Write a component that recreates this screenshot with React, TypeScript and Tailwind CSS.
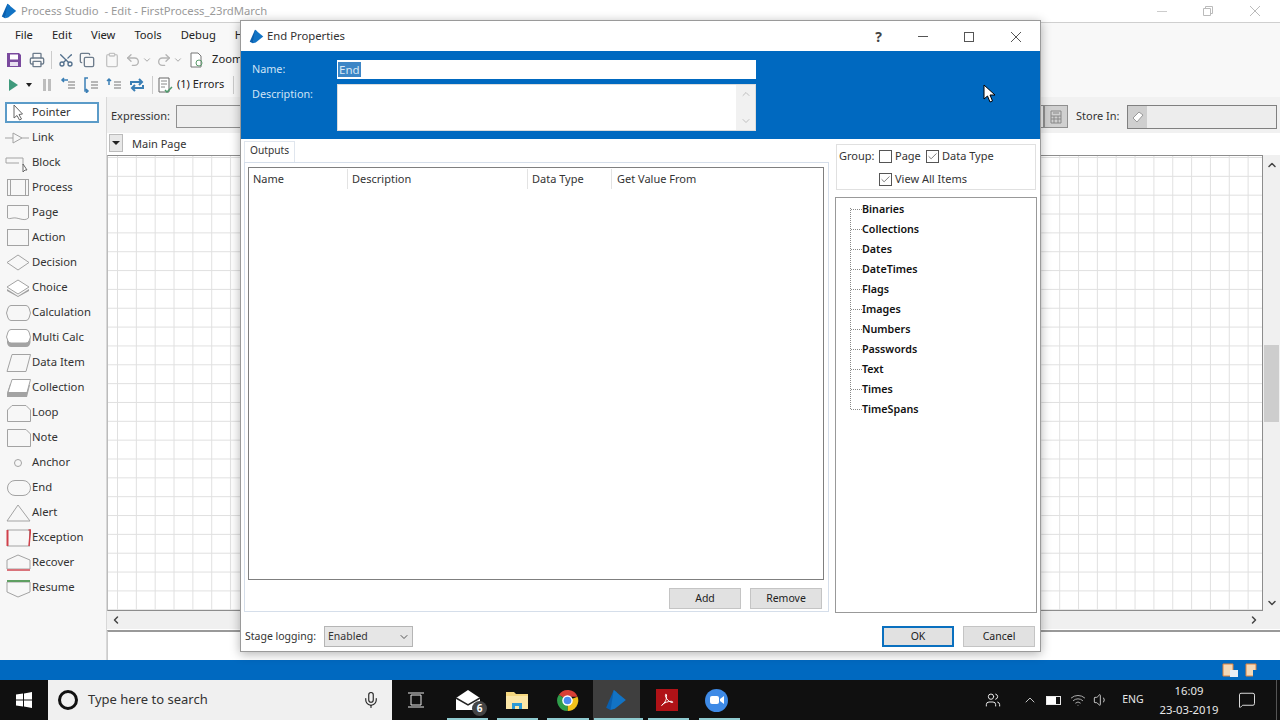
import { ReactNode } from 'react';
import { ChevronDown, ChevronUp, ChevronLeft, ChevronRight, Copy, Mic, Printer, Redo2, Scissors, Undo2, Clipboard, MessageSquare, Volume1, Wifi, Users, Check } from 'lucide-react';

const LOGO = (
  <>
    <path d="M1 17 L8 1 L11 3 L5 19 Z" fill="#0a5fae" />
    <path d="M8 1 L19 10 L9 18 L5 19 Z" fill="#1273c4" />
  </>
);

const G = { fill: 'none', stroke: '#a3a3a3', strokeWidth: 1 };

const TOOLS: { label: string; icon: ReactNode }[] = [
  { label: 'Pointer', icon: <path d="M11 3 V16 L14 13.5 L16.5 18 L18.5 17 L16 12.5 L19.5 12 Z" fill="#fff" stroke="#666" /> },
  { label: 'Link', icon: <><path d="M2 11 H10 M19 11 H26" {...G} /><path d="M10 6 L19 11 L10 16 Z" {...G} /></> },
  { label: 'Block', icon: <><path d="M3 6 H20 V13 M3 6 V11 H16" {...G} /><path d="M20 12 V20 L22 18 L24 18 Z" fill="#fff" stroke="#666" /></> },
  { label: 'Process', icon: <><rect x="4.5" y="2.5" width="21" height="16" {...G} /><path d="M7.5 2.5 V18.5 M22.5 2.5 V18.5" {...G} /></> },
  { label: 'Page', icon: <path d="M4.5 3.5 H25.5 V16 C21 20 15 15 10 16 C7 16.5 6 17 4.5 16 Z" {...G} /> },
  { label: 'Action', icon: <rect x="4.5" y="2.5" width="21" height="16" {...G} /> },
  { label: 'Decision', icon: <path d="M4 10.5 L15 3 L26 10.5 L15 18 Z" {...G} /> },
  { label: 'Choice', icon: <><path d="M4 12 V14 L15 20 L26 14 V12 L15 19 Z" fill="#a0a0a0" /><path d="M4 10 L15 3 L26 10 L15 17 Z" fill="#fff" stroke="#a3a3a3" /></> },
  { label: 'Calculation', icon: <path d="M8 3.5 H23 Q25 3.5 26 6 L27.5 11 L26 16 Q25 18.5 23 18.5 H8 Q6 18.5 5 16 L3.5 11 L5 6 Q6 3.5 8 3.5 Z" {...G} /> },
  { label: 'Multi Calc', icon: <><path d="M4 10 V16 Q5 20 8 20 H23 Q27 20 27.5 15 V10 Z" fill="#a3a3a3" /><path d="M8 2.5 H23 Q25 2.5 26 5 L27.5 10 L26 14 Q25 16 23 16 H8 Q6 16 5 14 L3.5 10 L5 5 Q6 2.5 8 2.5 Z" fill="#fff" stroke="#a3a3a3" /></> },
  { label: 'Data Item', icon: <path d="M9 2.5 H27.5 L23 19.5 H4 Z" {...G} /> },
  { label: 'Collection', icon: <><path d="M7 7 L4 16 V20 H24 L27 8 Z" fill="#a3a3a3" /><path d="M9 2.5 H27.5 L24 15.5 H5 Z" fill="#fff" stroke="#a3a3a3" /></> },
  { label: 'Loop', icon: <path d="M4.5 8 L9 3.5 H23 L27.5 8 V19.5 H4.5 Z" {...G} /> },
  { label: 'Note', icon: <path d="M4.5 2.5 H23 L27.5 7 V19.5 H4.5 Z" {...G} /> },
  { label: 'Anchor', icon: <circle cx="15" cy="11" r="3.5" {...G} /> },
  { label: 'End', icon: <rect x="4.5" y="3.5" width="23" height="15" rx="7.5" {...G} /> },
  { label: 'Alert', icon: <path d="M4 19 L15 3 L27 19 Z" {...G} /> },
  { label: 'Exception', icon: <><rect x="4.5" y="3" width="22" height="16" {...G} /><path d="M4.5 3 V19" stroke="#d0404a" strokeWidth="2" /><path d="M25.5 3 L27.5 3 L26 19" stroke="#d0404a" strokeWidth="1.5" fill="none" /></> },
  { label: 'Recover', icon: <><path d="M4 8 L15 3 L27 8 V17 H4 Z" {...G} /><path d="M4 18 H27" stroke="#d9737b" strokeWidth="2" /></> },
  { label: 'Resume', icon: <><path d="M4 5 V15 L15 20 L27 15 V5 Z" {...G} /><path d="M4 4 H27" stroke="#5f9f62" strokeWidth="2" /></> },
];

const TREE = ['Binaries', 'Collections', 'Dates', 'DateTimes', 'Flags', 'Images', 'Numbers', 'Passwords', 'Text', 'Times', 'TimeSpans'];

const FONT = 'font-["Noto_Sans","Open_Sans",sans-serif]';

function Box({ checked }: { checked?: boolean }) {
  return (
    <span className="flex h-[13px] w-[13px] shrink-0 items-center justify-center border border-[#555] bg-white">
      {checked && <Check className="h-[11px] w-[11px] text-[#444]" strokeWidth={1.5} />}
    </span>
  );
}

function DlgButton({ label, primary }: { label: string; primary?: boolean }) {
  return (
    <button className={`flex h-[21px] w-[72px] items-center justify-center bg-[#e1e1e1] text-[10.5px] text-[#222] ${primary ? 'border-2 border-[#0a70bf]' : 'border border-[#c4c4c4]'}`}>
      {label}
    </button>
  );
}

function ToolList() {
  return (
    <aside className="w-[107px] shrink-0 border-r border-[#d8d8d8] bg-[#f7f7f7] pt-[3px]">
      {TOOLS.map((t) => (
        <div key={t.label} className={`flex h-[25px] items-center text-[11.3px] text-[#333] ${t.label === 'Pointer' ? 'relative' : ''}`}>
          {t.label === 'Pointer' && <span className="absolute top-[2px] right-[7px] bottom-[2px] left-[5px] border-2 border-[#5b9bc8] bg-white" />}
          <svg viewBox="0 0 28 22" className="relative ml-[3px] h-[22px] w-[28px] shrink-0">{t.icon}</svg>
          <span className="relative ml-px">{t.label}</span>
        </div>
      ))}
    </aside>
  );
}

function Toolbars() {
  return (
    <>
      <div className="flex h-[24px] items-center bg-[#f8f8f8] pt-px text-[11.2px] text-[#222]">
        <span className="ml-[15px]">File</span>
        <span className="ml-[19px]">Edit</span>
        <span className="ml-[19px]">View</span>
        <span className="ml-[19px]">Tools</span>
        <span className="ml-[19px]">Debug</span>
        <span className="ml-[19px]">Help</span>
      </div>
      <div className="flex h-[25px] items-center bg-[#f8f8f8] text-[11.2px] text-[#222]">
        <svg viewBox="0 0 16 16" className="ml-[6px] h-4 w-4"><path d="M1 1 H13 L15 3 V15 H1 Z" fill="#7a4a9e" /><rect x="4" y="2.5" width="8" height="5" fill="#fff" /><rect x="4" y="10" width="8" height="4" fill="#e8e0f0" /></svg>
        <Printer className="ml-[7px] h-4 w-4 text-[#6d7c8c]" />
        <span className="ml-[6px] h-[18px] w-px bg-[#ccc]" />
        <Scissors className="ml-[6px] h-4 w-4 -rotate-90 text-[#53708d]" />
        <Copy className="ml-[5px] h-4 w-4 text-[#6d7c8c]" />
        <Clipboard className="ml-[9px] h-4 w-4 text-[#c4c4c4]" />
        <Undo2 className="ml-[5px] h-4 w-4 text-[#b4b4b4]" />
        <ChevronDown className="ml-px h-2.5 w-2.5 text-[#999]" />
        <Redo2 className="ml-[4px] h-4 w-4 text-[#b4b4b4]" />
        <ChevronDown className="ml-px h-2.5 w-2.5 text-[#999]" />
        <svg viewBox="0 0 16 16" className="ml-[5px] h-4 w-4"><path d="M3 1 H10 L13 4 V15 H3 Z" fill="#fff" stroke="#777" /><circle cx="11" cy="11" r="3" fill="none" stroke="#5a9a6a" /></svg>
        <span className="ml-[8px]">Zoom</span>
      </div>
      <div className="flex h-[25px] items-center bg-[#f8f8f8] text-[11px] text-[#222]">
        <svg viewBox="0 0 10 12" className="ml-[8px] h-3 w-[10px]"><path d="M1 0 L10 6 L1 12 Z" fill="#3f9a7c" /></svg>
        <svg viewBox="0 0 6 4" className="ml-[8px] h-1 w-1.5"><path d="M0 0 H6 L3 4 Z" fill="#222" /></svg>
        <svg viewBox="0 0 10 12" className="ml-[10px] h-3 w-[10px]"><path d="M1 0 H4 V12 H1 Z M6 0 H9 V12 H6 Z" fill="#bdbdbd" /></svg>
        {[0, 1, 2, 3].map((k) => (
          <svg key={k} viewBox="0 0 16 16" className={`h-4 w-4 ${k === 0 ? 'ml-[8px]' : 'ml-[7px]'}`}>
            {k === 3 ? (
              <path d="M2 8 V5 H13 M10 2 L13 5 L10 8 M14 8 V11 H3 M6 8 L3 11 L6 14" fill="none" stroke="#3b7fb5" strokeWidth="2" />
            ) : (
              <>
                <path d={k === 0 ? 'M8 3 H2 M4 1 L2 3 L4 5' : k === 1 ? 'M5 1 H2 V14 H5 M3 12 L5 14 L3 16' : 'M3 8 V2 M1 4 L3 2 L5 4'} fill="none" stroke="#3b7fb5" strokeWidth="1.5" />
                <path d="M8 5 H15 M8 8 H15 M8 11 H15" stroke="#777" />
              </>
            )}
          </svg>
        ))}
        <span className="ml-[7px] h-[18px] w-px bg-[#ccc]" />
        <svg viewBox="0 0 16 16" className="ml-[4px] h-4 w-4"><path d="M2 1 H12 V15 H2 Z" fill="#fff" stroke="#666" /><path d="M4 4 H10 M4 7 H10 M4 10 H8" stroke="#888" /><path d="M8 13 L10 15 L15 10" fill="none" stroke="#4c9a6a" strokeWidth="1.5" /></svg>
        <span className="ml-[4px]">(1) Errors</span>
        <span className="ml-[9px] h-[18px] w-px bg-[#ccc]" />
      </div>
    </>
  );
}

function Workspace() {
  return (
    <main className="flex min-w-0 flex-1 flex-col bg-white">
      <div className="flex h-[36px] shrink-0 items-center bg-[#f1f1f1] pt-[3px] text-[11px] text-[#333]">
        <span className="ml-[4px] w-[65px] whitespace-nowrap">Expression:</span>
        <span className="h-[23px] w-[868px] border border-[#909090] bg-[#efefef]" />
        <span className="flex h-[23px] w-[24px] items-center justify-center border border-[#909090] bg-[#d0d0d0]">
          <svg viewBox="0 0 12 14" className="h-[14px] w-3"><path d="M1 1 H11 V13 H1 Z M3 3 H9 M1 6 H11 M1 9 H11 M4 6 V13 M8 6 V13" fill="none" stroke="#888" /></svg>
        </span>
        <span className="ml-[8px] w-[51px] whitespace-nowrap">Store In:</span>
        <span className="flex h-[24px] w-[150px] border border-[#808080] bg-[#ededed]">
          <span className="flex w-[19px] items-center justify-center bg-[#cfcfcf]">
            <svg viewBox="0 0 12 12" className="h-3 w-3"><path d="M1 7 L7 1 L11 4 L5 11 Z" fill="#fff" stroke="#999" /></svg>
          </span>
        </span>
      </div>
      <div className="flex h-[22px] shrink-0 items-end">
        <span className="mb-[3px] ml-[2px] flex h-[18px] w-[14px] items-center justify-center border border-[#bbb] bg-[#e8e8e8]">
          <svg viewBox="0 0 8 4" className="h-1 w-2"><path d="M0 0 H8 L4 4 Z" fill="#222" /></svg>
        </span>
        <span className="ml-[9px] mb-[3px] text-[11px] text-[#333]">Main Page</span>
      </div>
      <div className="flex min-h-0 flex-1">
        <div className="flex-1 border-y border-r border-l border-[#8d8d8d] border-l-[#bbb] bg-[linear-gradient(to_right,#e0e0e0_1px,transparent_1px),linear-gradient(to_bottom,#e0e0e0_1px,transparent_1px)] bg-size-[18.85px_18.85px] bg-position-[9px_1px]" />
        <div className="flex w-[17px] shrink-0 flex-col items-center bg-[#f0f0f0] pt-[2px]">
          <ChevronUp className="mt-[2px] h-3 w-3 text-[#444]" strokeWidth={3} />
          <span className="mt-[174px] h-[77px] w-[15px] bg-[#cdcdcd]" />
          <ChevronDown className="mt-auto mb-[2px] h-3 w-3 text-[#444]" strokeWidth={3} />
        </div>
      </div>
      <div className="flex h-[18px] shrink-0 items-center justify-between bg-[#f0f0f0] pr-[20px] pl-[3px]">
        <ChevronLeft className="h-3 w-3 text-[#444]" strokeWidth={3} />
        <ChevronRight className="h-3 w-3 text-[#444]" strokeWidth={3} />
      </div>
      <div className="mt-px h-[30px] shrink-0 border-t-2 border-l border-t-[#999] border-l-[#ccc] bg-white" />
    </main>
  );
}

function Dialog() {
  return (
    <div className="absolute top-[20px] left-[240px] flex h-[632px] w-[801px] flex-col border border-[#9a9a9a] bg-white shadow-[0_2px_10px_rgba(0,0,0,0.3)]">
      <div className="flex h-[30px] shrink-0 items-center pt-px text-[11.3px] text-[#333]">
        <svg viewBox="0 0 20 20" className="ml-[8px] h-[15px] w-[15px]">{LOGO}</svg>
        <span className="ml-[3px]">End Properties</span>
        <span className="ml-auto text-sm font-bold text-[#444]">?</span>
        <span className="ml-[36px] h-px w-[10px] bg-[#555]" />
        <span className="ml-[36px] h-[10px] w-[10px] border border-[#555]" />
        <svg viewBox="0 0 12 12" className="mr-[18px] ml-[36px] h-3 w-3"><path d="M1 1 L11 11 M11 1 L1 11" stroke="#555" /></svg>
      </div>
      <div className="flex h-[88px] shrink-0 bg-[#0069c0] text-[10.8px] text-[#cfe3f5]">
        <div className="w-[96px] shrink-0 pt-[10px] pl-[11px]">
          <div className="h-[25px]">Name:</div>
          <div>Description:</div>
        </div>
        <div className="w-[419px] pt-[9px]">
          <div className="flex h-[19px] items-center bg-white pl-px">
            <span className="bg-[#3d86c6] px-px text-[11.5px] leading-[15px] text-[#d8e8f5]">End</span>
          </div>
          <div className="mt-[5px] flex h-[47px] border border-[#dcdcdc] bg-white">
            <div className="ml-auto flex w-[19px] flex-col items-center justify-between bg-[#f1f1f1] py-[3px]">
              <ChevronUp className="h-3 w-3 text-[#c0c0c0]" />
              <ChevronDown className="h-3 w-3 text-[#c0c0c0]" />
            </div>
          </div>
        </div>
      </div>
      <div className="flex h-[474px] shrink-0 text-[11px] text-[#333]">
        <div className="mt-[2px] ml-[3px] w-[585px] shrink-0">
          <div className="flex h-[21px] w-[51px] items-center justify-center border-x border-t border-[#e0e6ee] pb-[2px] text-[10.2px]">Outputs</div>
          <div className="h-[450px] border border-[#d5deea] pt-[4px] pl-[3px]">
            <div className="h-[413px] w-[576px] border border-[#7f7f7f] bg-white">
              <div className="flex h-[21px] items-center pt-px">
                <span className="flex h-full w-[99px] items-center border-r border-[#e3e3e3] pl-[4px]">Name</span>
                <span className="flex h-full w-[180px] items-center border-r border-[#e3e3e3] pl-[4px]">Description</span>
                <span className="flex h-full w-[84px] items-center border-r border-[#e3e3e3] pl-[4px]">Data Type</span>
                <span className="pl-[5px]">Get Value From</span>
              </div>
            </div>
            <div className="mt-[8px] flex justify-end gap-[9px] pr-[6px]">
              <DlgButton label="Add" />
              <DlgButton label="Remove" />
            </div>
          </div>
        </div>
        <div className="ml-[6px] w-[202px] shrink-0">
          <div className="mt-[5px] ml-px h-[46px] w-[200px] border border-[#e0e0e0] pt-[3px]">
            <div className="flex h-[17px] items-center">
              <span className="ml-[2px] w-[40px]">Group:</span>
              <Box />
              <span className="ml-[3px] w-[31px]">Page</span>
              <Box checked />
              <span className="ml-[3px]">Data Type</span>
            </div>
            <div className="mt-[8px] ml-[42px] flex h-[13px] items-center">
              <Box checked />
              <span className="ml-[3px]">View All Items</span>
            </div>
          </div>
          <div className="relative mt-[7px] h-[416px] border border-[#999] pt-px">
            <span className="absolute top-[10px] left-[14px] h-[201px] border-l border-dotted border-[#888]" />
            {TREE.map((name) => (
              <div key={name} className="flex h-[20px] items-center pl-[15px]">
                <span className="w-[11px] border-t border-dotted border-[#888]" />
                <span className="text-[10.7px] font-semibold text-[#111]">{name}</span>
              </div>
            ))}
          </div>
        </div>
      </div>
      <div className="mt-[13px] flex items-center text-[10.5px] text-[#333]">
        <span className="ml-[4px] w-[79px] whitespace-nowrap">Stage logging:</span>
        <span className="flex h-[21px] w-[89px] items-center justify-between border border-[#b5b5b5] bg-[#e6e6e6] pr-[2px] pl-[3px]">
          Enabled
          <ChevronDown className="h-3 w-3 text-[#555]" />
        </span>
        <span className="ml-auto flex gap-[9px] pr-[5px]">
          <DlgButton label="OK" primary />
          <DlgButton label="Cancel" />
        </span>
      </div>
    </div>
  );
}

function Taskbar() {
  const marks = ['ml-[55px] w-[41px]', 'ml-[9px] w-[41px]', 'ml-[9px] w-[42px]', 'ml-[5px] w-[49px]', 'ml-[5px] w-[41px]', 'ml-[10px] w-[41px]'];
  return (
    <div className="relative flex h-[40px] shrink-0 items-center bg-[#101010] text-[#e8e8e8]">
      <svg viewBox="0 0 16 16" className="ml-[16px] h-4 w-4"><path d="M0 2.5 L7 1.5 V7.5 H0 Z M8 1.4 L16 0 V7.5 H8 Z M0 8.5 H7 V14.5 L0 13.5 Z M8 8.5 H16 V16 L8 14.6 Z" fill="#fff" /></svg>
      <div className="ml-[16px] flex h-full w-[344px] items-center bg-[#f0f0f0] text-[#333]">
        <span className="ml-[10px] h-[20px] w-[20px] rounded-full border-[3px] border-[#111]" />
        <span className="ml-[10px] text-[13px]">Type here to search</span>
        <Mic className="mr-[12px] ml-auto h-[18px] w-[18px] text-[#222]" strokeWidth={1.5} />
      </div>
      <svg viewBox="0 0 16 16" className="ml-[16px] h-4 w-4"><path d="M3 3 H13 V13 H3 Z M0 1 H16 M0 15 H16" fill="none" stroke="#e8e8e8" /></svg>
      <div className="relative ml-[31px] h-[22px] w-[30px]">
        <svg viewBox="0 0 30 22" className="h-full w-full"><path d="M1 9 L13 1 L25 9 V21 H1 Z" fill="#fff" /><path d="M1 9 L13 16 L25 9" fill="none" stroke="#222" strokeWidth="1.5" /></svg>
        <span className="absolute -right-[2px] -bottom-[5px] flex h-[15px] w-[15px] items-center justify-center rounded-full bg-[#444] text-[10px] font-bold text-white">6</span>
      </div>
      <svg viewBox="0 0 22 20" className="ml-[21px] h-[20px] w-[22px]"><path d="M0 2 H8 L10 4 H22 V19 H0 Z" fill="#f5d77e" /><path d="M0 6 H22 V19 H0 Z" fill="#fbe6a6" /><path d="M6 19 V13 H16 V19 H13 V16 H9 V19 Z" fill="#2b9ad6" /></svg>
      <svg viewBox="0 0 24 24" className="ml-[28px] h-[23px] w-[23px]">
        <path d="M12 12 L3 6 A11 11 0 0 1 22.5 8 H12 Z" fill="#d93f36" />
        <path d="M12 12 L22.5 8 A11 11 0 0 1 12 23 Z" fill="#f2c21a" />
        <path d="M12 12 L12 23 A11 11 0 0 1 3 6 Z" fill="#2f9e4b" />
        <circle cx="12" cy="12" r="5.5" fill="#fff" />
        <circle cx="12" cy="12" r="4" fill="#4b8bf0" />
      </svg>
      <div className="ml-[14px] flex h-full w-[47px] items-center bg-[#3f3f3f] pl-[12px]">
        <svg viewBox="0 0 20 20" className="h-[22px] w-[22px]">{LOGO}</svg>
      </div>
      <span className="ml-[16px] flex h-[22px] w-[22px] items-center justify-center bg-[#b01217]">
        <svg viewBox="0 0 16 16" className="h-4 w-4"><path d="M3 13 C6 11 8 7 7.5 3 C7.3 1.5 6 2 6.5 4 C7.2 7 10 10 13 10.5 C14.5 10.7 14 9.2 12 9.3 C9 9.5 5.5 10.5 3.5 12.5 C2.5 13.5 2.5 14 3 13 Z" fill="none" stroke="#fff" strokeWidth="1" /></svg>
      </span>
      <span className="ml-[27px] flex h-[23px] w-[23px] items-center justify-center rounded-full bg-[#3e8ae6]">
        <svg viewBox="0 0 14 10" className="h-[10px] w-[14px]"><rect x="0" y="1" width="9" height="8" rx="2" fill="#fff" /><path d="M10 4 L14 1 V9 L10 6 Z" fill="#fff" /></svg>
      </span>
      <Users className="ml-[257px] h-4 w-4 text-[#e8e8e8]" strokeWidth={1.5} />
      <ChevronUp className="ml-[21px] h-4 w-4 text-[#e8e8e8]" strokeWidth={1.25} />
      <span className="ml-[8px] flex h-[9px] w-[15px] border border-[#e8e8e8]"><span className="w-[9px] bg-white" /></span>
      <Wifi className="ml-[9px] h-4 w-4 text-[#aaa]" strokeWidth={1.5} />
      <Volume1 className="ml-[7px] h-4 w-4 text-[#e8e8e8]" strokeWidth={1.25} />
      <span className="ml-[12px] w-[24px] text-center text-[10.5px]">ENG</span>
      <div className="ml-[12px] w-[64px] text-center text-[11.3px] leading-[19px] whitespace-nowrap">
        <div>16:09</div>
        <div>23-03-2019</div>
      </div>
      <MessageSquare className="ml-[17px] h-[18px] w-[18px] text-[#e8e8e8]" strokeWidth={1.25} />
      <span className="ml-[20px] h-full w-px bg-[#555]" />
      <div className="absolute bottom-0 left-[392px] flex">
        {marks.map((m, i) => (
          <span key={i} className={`h-[2px] bg-[#8fcbd0] ${m}`} />
        ))}
      </div>
    </div>
  );
}

export default function App() {
  return (
    <div className={`relative flex h-[720px] w-[1280px] flex-col overflow-hidden bg-white ${FONT}`}>
      <div className="flex h-[23px] shrink-0 items-center border-b border-[#cfcfcf] text-[11.3px] text-[#9a9a9a]">
        <svg viewBox="0 0 20 20" className="ml-px h-4 w-4">{LOGO}</svg>
        <span className="ml-[4px]">Process Studio&nbsp; - Edit - FirstProcess_23rdMarch</span>
        <span className="ml-auto h-px w-[10px] bg-[#ccc]" />
        <svg viewBox="0 0 12 12" className="ml-[35px] h-3 w-3"><path d="M1.5 3.5 H8.5 V10.5 H1.5 Z M3.5 3.5 V1.5 H10.5 V8.5 H8.5" fill="none" stroke="#bbb" /></svg>
        <svg viewBox="0 0 12 12" className="mr-[19px] ml-[35px] h-3 w-3"><path d="M1 1 L11 11 M11 1 L1 11" stroke="#bbb" /></svg>
      </div>
      <Toolbars />
      <div className="flex min-h-0 flex-1">
        <ToolList />
        <Workspace />
      </div>
      <div className="flex h-[20px] shrink-0 items-center justify-end gap-[7px] bg-[#0069c0] pr-[19px]">
        {[0, 1].map((i) => (
          <svg key={i} viewBox="0 0 16 14" className="h-[14px] w-4"><path d="M1 1 H11 V13 H1 Z" fill="#f3d9b8" stroke="#e0823a" /><rect x="8" y="7" width="8" height="7" fill={i ? '#0069c0' : '#e8eef5'} /></svg>
        ))}
      </div>
      <Taskbar />
      <Dialog />
      <svg viewBox="0 0 13 19" className="absolute top-[84px] left-[983px] h-[19px] w-[13px]"><path d="M1 1 V15 L4.5 12 L7 18 L9.5 17 L7 11 L12 11 Z" fill="#fff" stroke="#000" /></svg>
    </div>
  );
}
